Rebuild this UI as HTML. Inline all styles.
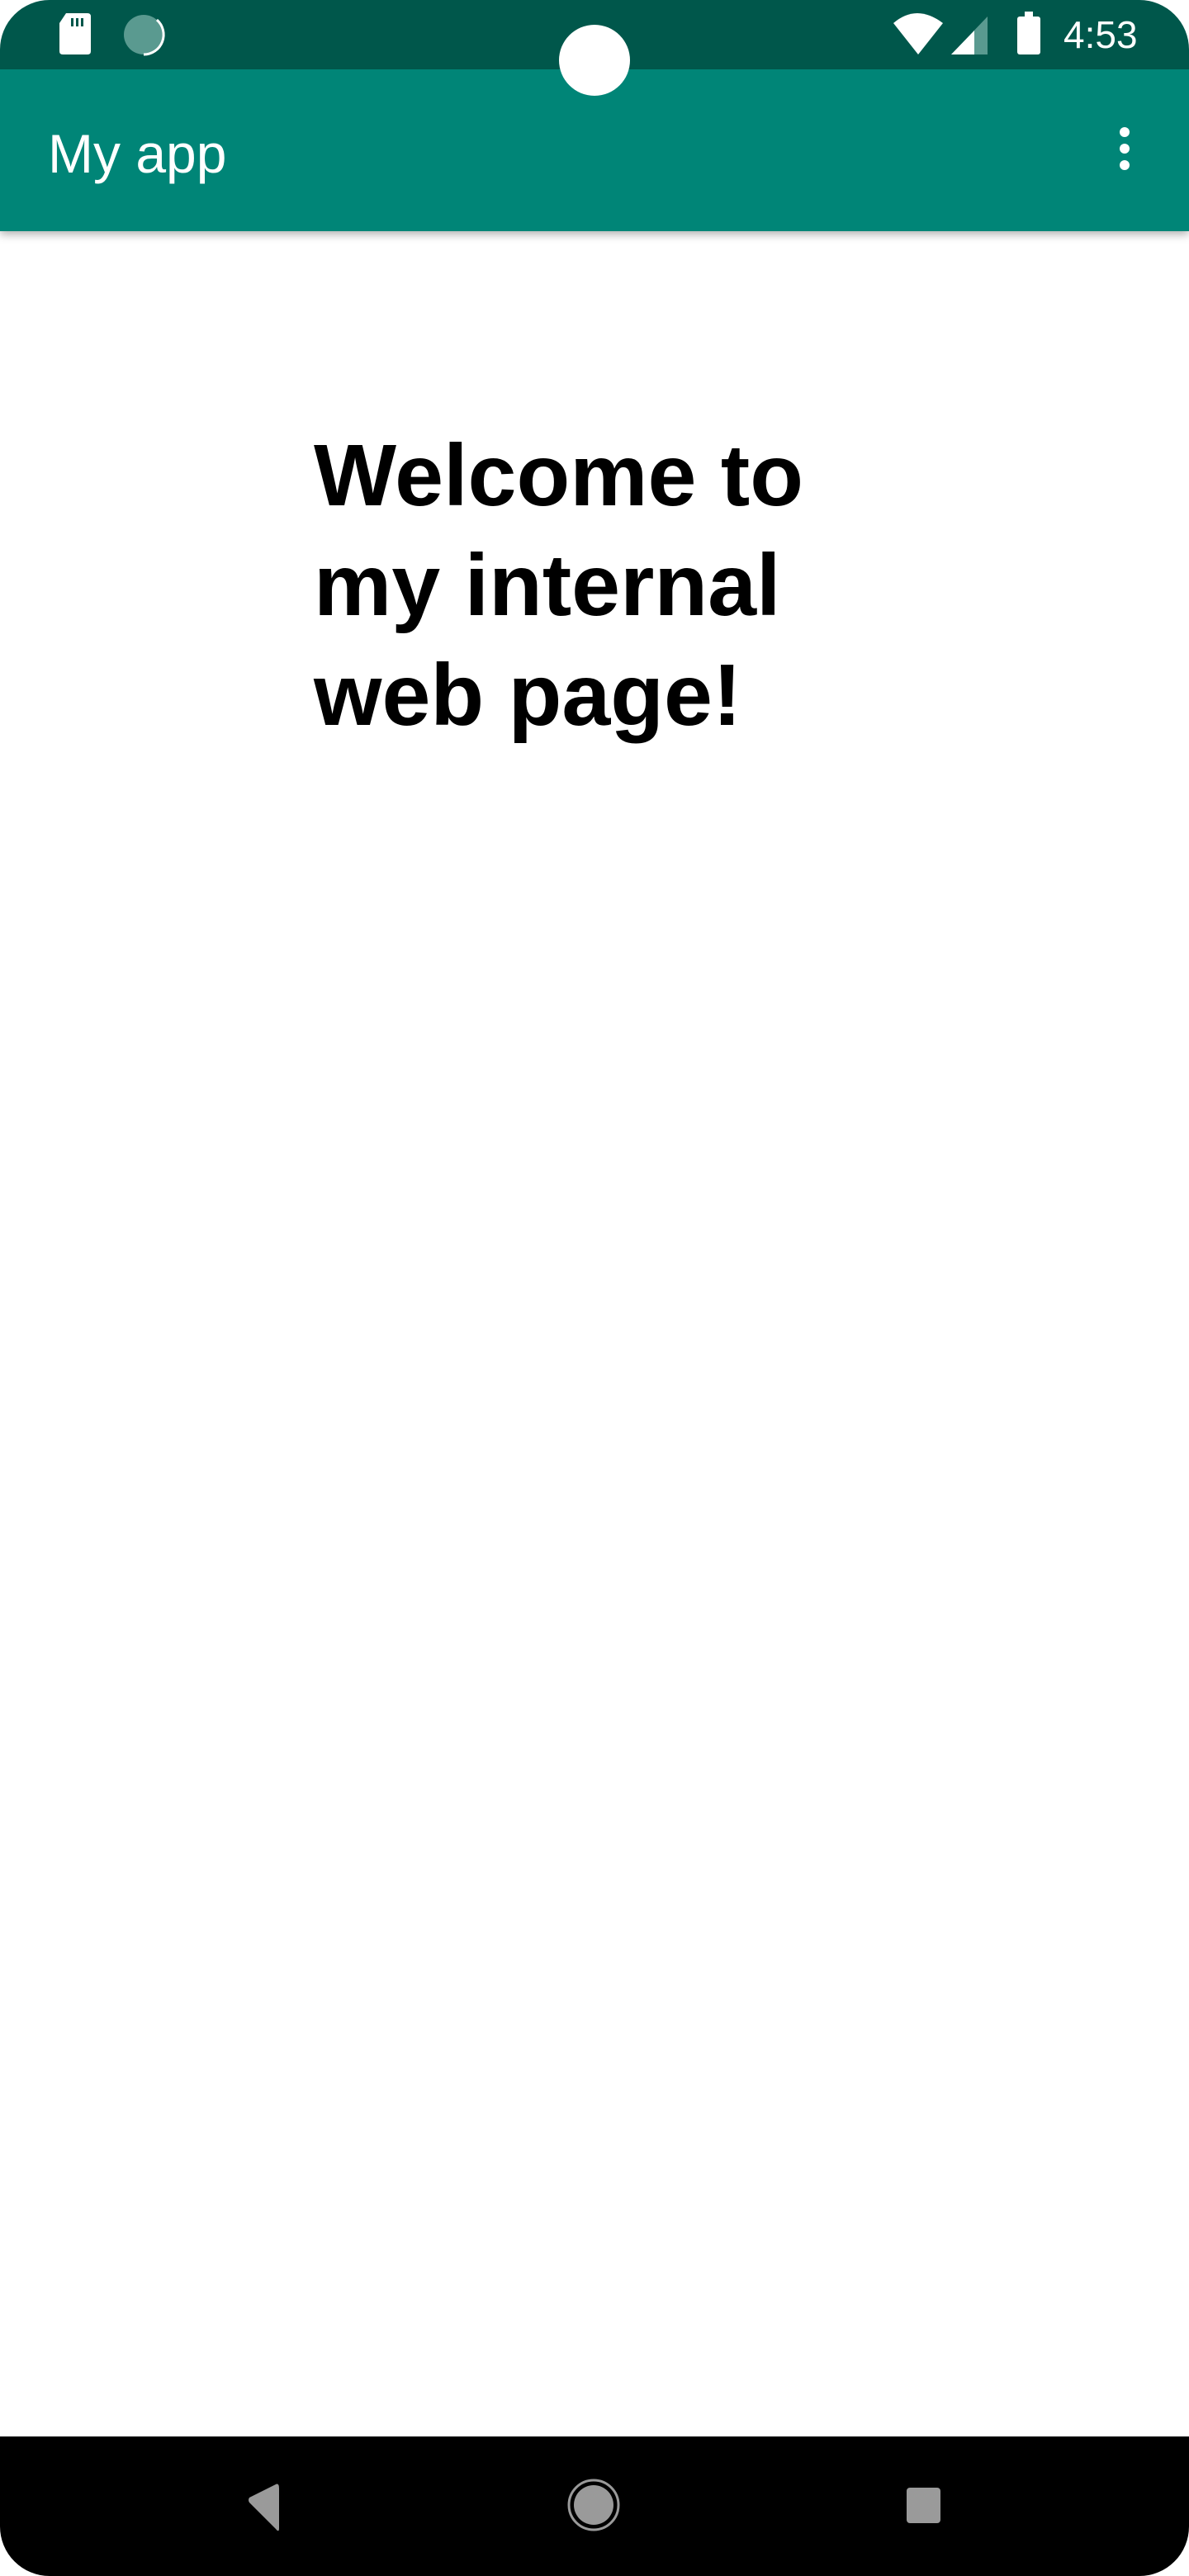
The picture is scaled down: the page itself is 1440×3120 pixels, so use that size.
<!DOCTYPE html>
<html><head><meta charset="utf-8">
<style>
html,body{margin:0;padding:0;background:#fff;}
body{width:1440px;height:3120px;position:relative;overflow:hidden;font-family:"Liberation Sans",sans-serif;}
.status{position:absolute;left:0;top:0;width:1440px;height:84px;background:#00574b;border-radius:60px 60px 0 0;}
.toolbar{position:absolute;left:0;top:84px;width:1440px;height:196px;background:#008577;box-shadow:0 4px 10px rgba(0,0,0,0.3);}
.title{position:absolute;left:58px;top:153px;line-height:1;color:#fff;font-size:66px;}
.cam{position:absolute;left:677px;top:30px;width:86px;height:86px;border-radius:50%;background:#fff;}
.dots{position:absolute;left:1356px;top:154px;}
.dots i{display:block;width:12px;height:12px;border-radius:50%;background:#fff;margin-bottom:8px;}
.time{position:absolute;left:1288px;top:16px;font-size:46px;color:#fff;line-height:52px;}
h1{position:absolute;left:380px;top:510px;margin:0;font-size:106px;line-height:133px;font-weight:bold;color:#000;}
.nav{position:absolute;left:0;top:2951px;width:1440px;height:169px;background:#000;border-radius:0 0 60px 60px;}
</style></head><body>
<div class="toolbar"></div>
<div class="status"></div>
<div class="title">My app</div>
<div class="dots"><i></i><i></i><i></i></div>
<div class="cam"></div>
<svg style="position:absolute;left:0;top:0" width="1440" height="84">
 <path d="M80 16 H106 Q110 16 110 20 V62 Q110 66 106 66 H76 Q72 66 72 62 V28 Z" fill="#fff"/>
 <rect x="86" y="22" width="3" height="10" fill="#00574b"/><rect x="92" y="22" width="3" height="10" fill="#00574b"/><rect x="98" y="22" width="3" height="10" fill="#00574b"/>
 <circle cx="174" cy="42" r="24" fill="#5a9a90"/>
 <path d="M190 24 A24 24 0 0 1 174 66" stroke="#fff" stroke-width="3" fill="none"/>
 <path d="M1082 28 Q1110 4 1142 28 L1112 66 Z" fill="#fff"/>
 <path d="M1152 66 L1196 20 V66 Z" fill="#5a9a90"/>
 <path d="M1152 66 L1180 37 V66 Z" fill="#fff"/>
 <rect x="1232" y="20" width="28" height="46" rx="3" fill="#fff"/>
 <rect x="1241" y="14" width="10" height="8" fill="#fff"/>
</svg>
<div class="time">4:53</div>
<h1>Welcome to<br>my internal<br>web page!</h1>
<div class="nav"></div>
<svg style="position:absolute;left:0;top:2951px" width="1440" height="169">
 <path d="M338 63 V111 Q338 117 334 112 L302 80 Q300 77 302 74 L334 58 Q338 56 338 63 Z" fill="#9a9a9a"/>
 <circle cx="719" cy="83" r="30" fill="none" stroke="#9a9a9a" stroke-width="3"/>
 <circle cx="719" cy="83" r="24" fill="#9a9a9a"/>
 <rect x="1098" y="62" width="41" height="43" rx="4" fill="#9a9a9a"/>
</svg>
</body></html>
